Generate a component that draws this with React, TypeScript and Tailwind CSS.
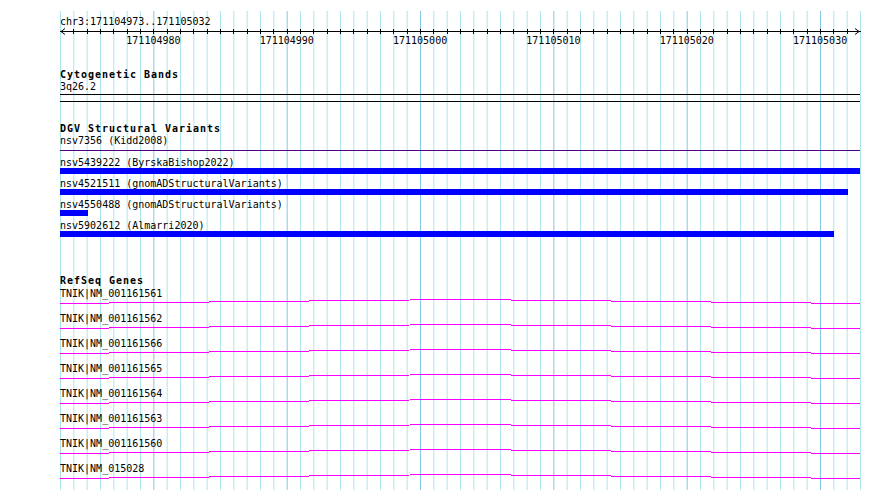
import React from "react";

const START = 171104973;
const PX = 800 / 60;
const xOf = (bp: number) => 60 + (bp - START) * PX;

const majors = [171104980, 171104990, 171105000, 171105010, 171105020, 171105030];

const dgvRows = [
  { label: "nsv5439222 (ByrskaBishop2022)", w: "w-[800px]" },
  { label: "nsv4521511 (gnomADStructuralVariants)", w: "w-[788px]" },
  { label: "nsv4550488 (gnomADStructuralVariants)", w: "w-[28px]" },
  { label: "nsv5902612 (Almarri2020)", w: "w-[774px]" },
];

const genes = [
  "NM_001161561",
  "NM_001161562",
  "NM_001161566",
  "NM_001161565",
  "NM_001161564",
  "NM_001161563",
  "NM_001161560",
  "NM_015028",
];

function Grid() {
  const lines = [];
  for (let k = 0; k <= 60; k++) {
    const x = 60.5 + k * PX;
    const major = (k - 7) % 10 === 0;
    lines.push(
      <line
        key={k}
        x1={x}
        x2={x}
        y1={11}
        y2={490}
        stroke={major ? "#86c6e6" : "#ace6ec"}
        strokeWidth={1}
      />
    );
  }
  return (
    <svg className="absolute left-0 top-0" width={890} height={490}>
      {lines}
    </svg>
  );
}

function Ruler() {
  const ticks = [];
  for (let k = 1; k < 60; k++) {
    const x = Math.round(60 + k * PX) + 0.5;
    ticks.push(<line key={k} x1={x} x2={x} y1={2} y2={7} stroke="#000" strokeWidth={1} />);
  }
  return (
    <div className="relative h-[19px] w-[890px]">
      <svg className="absolute left-0 top-0" width={890} height={19} shapeRendering="crispEdges">
        <line x1={60} x2={861} y1={4.5} y2={4.5} stroke="#000" strokeWidth={1} />
        {ticks}
        <polyline points="65,1.5 61,4.5 65,7.5" fill="none" stroke="#000" strokeWidth={1} shapeRendering="auto" />
        <polyline points="855,1.5 859,4.5 855,7.5" fill="none" stroke="#000" strokeWidth={1} shapeRendering="auto" />
      </svg>
      {majors.map((bp) => (
        <div
          key={bp}
          className="absolute top-[8px] leading-[12px] text-[10px]"
          style={{ left: xOf(bp) - 27 }}
        >
          {bp}
        </div>
      ))}
    </div>
  );
}

function Title({ children }: { children: React.ReactNode }) {
  return (
    <div className="ml-[60px] h-[12px] leading-[12px] text-[10px] font-bold tracking-[0.98px] whitespace-pre">
      <span className="relative top-px">{children}</span>
    </div>
  );
}

function Label({ children }: { children: React.ReactNode }) {
  return (
    <div className="ml-[60px] h-[12px] leading-[12px] text-[10px] whitespace-pre">
      <span className="relative top-px">{children}</span>
    </div>
  );
}

function Hat() {
  return (
    <svg className="ml-[60px] block" width={800} height={13}>
      <polyline
        points="0,4.5 400,0.5 800,4.5"
        fill="none"
        stroke="#ff00ff"
        strokeWidth={1}
        shapeRendering="crispEdges"
      />
    </svg>
  );
}

export default function App() {
  return (
    <div className="relative w-[890px] h-[490px] overflow-hidden bg-white text-black font-['DejaVu_Sans_Mono',monospace]">
      <Grid />
      <div className="relative flex flex-col pt-[15px]">
        <Label>chr3:171104973..171105032</Label>
        <Ruler />

        <div className="mt-[22px]">
          <Title>Cytogenetic Bands</Title>
        </div>
        <Label>3q26.2</Label>
        <div className="ml-[60px] mt-[2px] h-px w-[800px] bg-black" />
        <div className="ml-[60px] mt-[6px] h-px w-[800px] bg-black" />

        <div className="mt-[20px]">
          <Title>DGV Structural Variants</Title>
        </div>
        <Label>nsv7356 (Kidd2008)</Label>
        <div className="ml-[60px] mt-[4px] h-px w-[800px] bg-[#4b0082]" />
        <div className="mt-[2px] flex flex-col">
          {dgvRows.map((r) => (
            <div key={r.label} className="mt-[3px] flex flex-col">
              <Label>{r.label}</Label>
              <div className={`ml-[60px] h-[6px] bg-[#0000ff] ${r.w}`} />
            </div>
          ))}
        </div>

        <div className="mt-[37px]">
          <Title>RefSeq Genes</Title>
        </div>
        <div className="mt-[1px] flex flex-col">
          {genes.map((g) => (
            <div key={g} className="flex flex-col">
              <Label>{"TNIK|" + g}</Label>
              <Hat />
            </div>
          ))}
        </div>
      </div>
    </div>
  );
}
